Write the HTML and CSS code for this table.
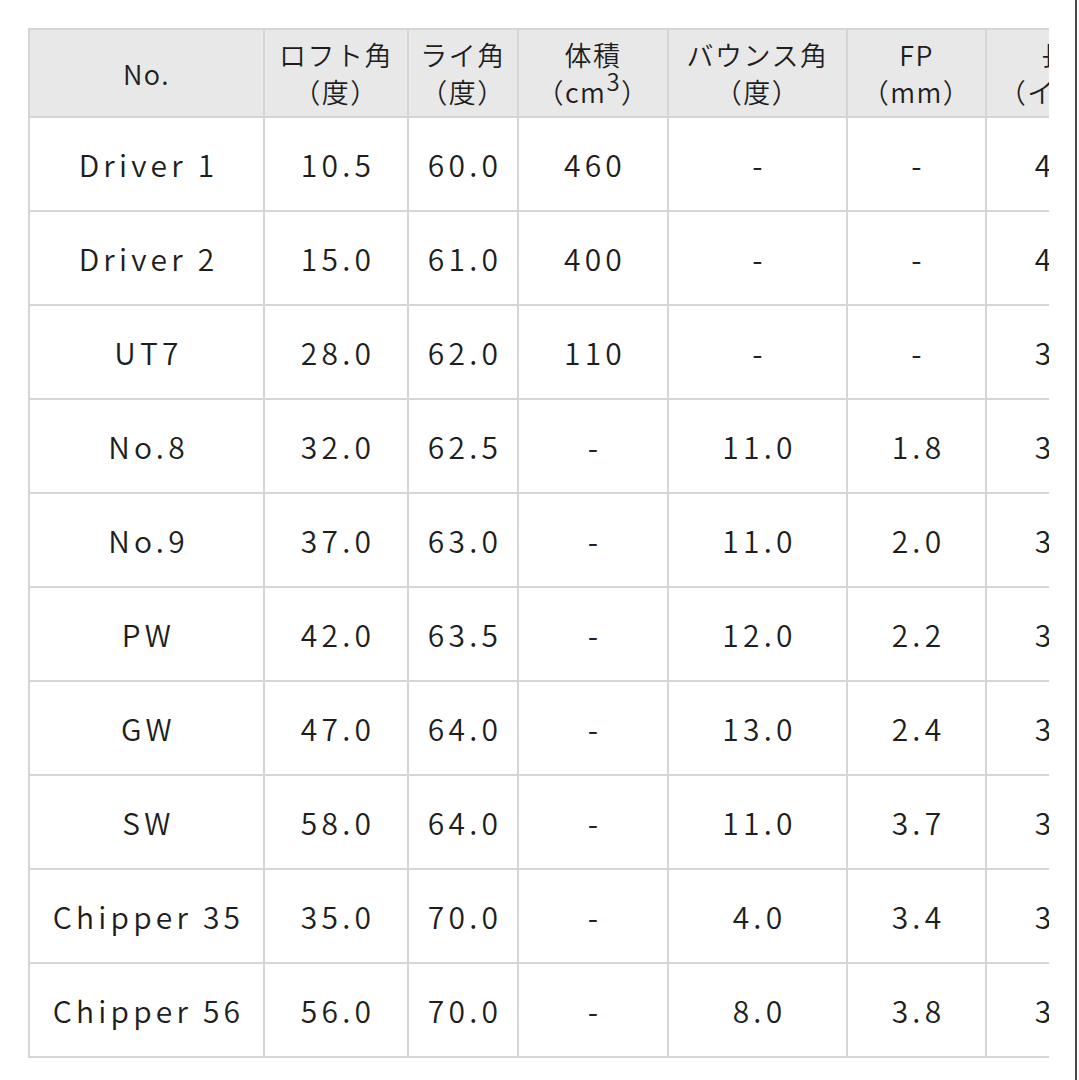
FILE: index.html
```html
<!DOCTYPE html>
<html lang="ja">
<head>
<meta charset="utf-8">
<title>Spec table</title>
<link rel="stylesheet" href="styles.css">
</head>
<body>
<div class="page">
  <div class="scroller">
    <table class="spec">
      <colgroup>
        <col class="c1"><col class="c2"><col class="c3"><col class="c4"><col class="c5"><col class="c6"><col class="c7">
      </colgroup>
      <thead>
        <tr>
          <th>No.</th>
          <th>ロフト角<br>（度）</th>
          <th>ライ角<br>（度）</th>
          <th>体積<br>（cm<sup>3</sup>）</th>
          <th>バウンス角<br>（度）</th>
          <th>FP<br>（mm）</th>
          <th>長さ<br>（インチ）</th>
        </tr>
      </thead>
      <tbody>
        <tr><td>Driver 1</td><td>10.5</td><td>60.0</td><td>460</td><td>-</td><td>-</td><td>45.5</td></tr>
        <tr><td>Driver 2</td><td>15.0</td><td>61.0</td><td>400</td><td>-</td><td>-</td><td>43.0</td></tr>
        <tr><td>UT7</td><td>28.0</td><td>62.0</td><td>110</td><td>-</td><td>-</td><td>38.5</td></tr>
        <tr><td>No.8</td><td>32.0</td><td>62.5</td><td>-</td><td>11.0</td><td>1.8</td><td>37.0</td></tr>
        <tr><td>No.9</td><td>37.0</td><td>63.0</td><td>-</td><td>11.0</td><td>2.0</td><td>36.5</td></tr>
        <tr><td>PW</td><td>42.0</td><td>63.5</td><td>-</td><td>12.0</td><td>2.2</td><td>36.0</td></tr>
        <tr><td>GW</td><td>47.0</td><td>64.0</td><td>-</td><td>13.0</td><td>2.4</td><td>35.5</td></tr>
        <tr><td>SW</td><td>58.0</td><td>64.0</td><td>-</td><td>11.0</td><td>3.7</td><td>35.5</td></tr>
        <tr><td>Chipper 35</td><td>35.0</td><td>70.0</td><td>-</td><td>4.0</td><td>3.4</td><td>35.0</td></tr>
        <tr><td>Chipper 56</td><td>56.0</td><td>70.0</td><td>-</td><td>8.0</td><td>3.8</td><td>35.0</td></tr>
      </tbody>
    </table>
  </div>
</div>
</body>
</html>
```
FILE: styles.css
```css
html, body {
  margin: 0;
  padding: 0;
  background: #ffffff;
}

body {
  font-family: "Noto Sans CJK JP", "Noto Sans", sans-serif;
  color: #1e1e1e;
}

.page {
  width: 1077px;
  height: 1080px;
  box-sizing: border-box;
  border-right: 2px solid #4a4a4a;
  padding: 28px 28px 0 28px;
  overflow: hidden;
}

.scroller {
  width: 1021px;
  overflow: hidden;
}

.spec {
  border-collapse: collapse;
  table-layout: fixed;
  width: 1125px;
}

.c1 { width: 235px; }
.c2 { width: 144px; }
.c3 { width: 110px; }
.c4 { width: 150px; }
.c5 { width: 179px; }
.c6 { width: 139px; }
.c7 { width: 168px; }

.spec th,
.spec td {
  border: 2px solid #d5d5d5;
  text-align: center;
  vertical-align: middle;
  padding: 0;
  white-space: nowrap;
  font-weight: 350;
}

.spec th {
  background: #e8e8e8;
  font-size: 27px;
  line-height: 37px;
  letter-spacing: 1.5px;
  height: 86px;
}

.spec th sup {
  font-size: 24px;
  line-height: 0;
  vertical-align: 12px;
}

.spec td {
  font-size: 30px;
  line-height: 40px;
  letter-spacing: 4.2px;
  text-indent: 4px;
  height: 92px;
}
```
